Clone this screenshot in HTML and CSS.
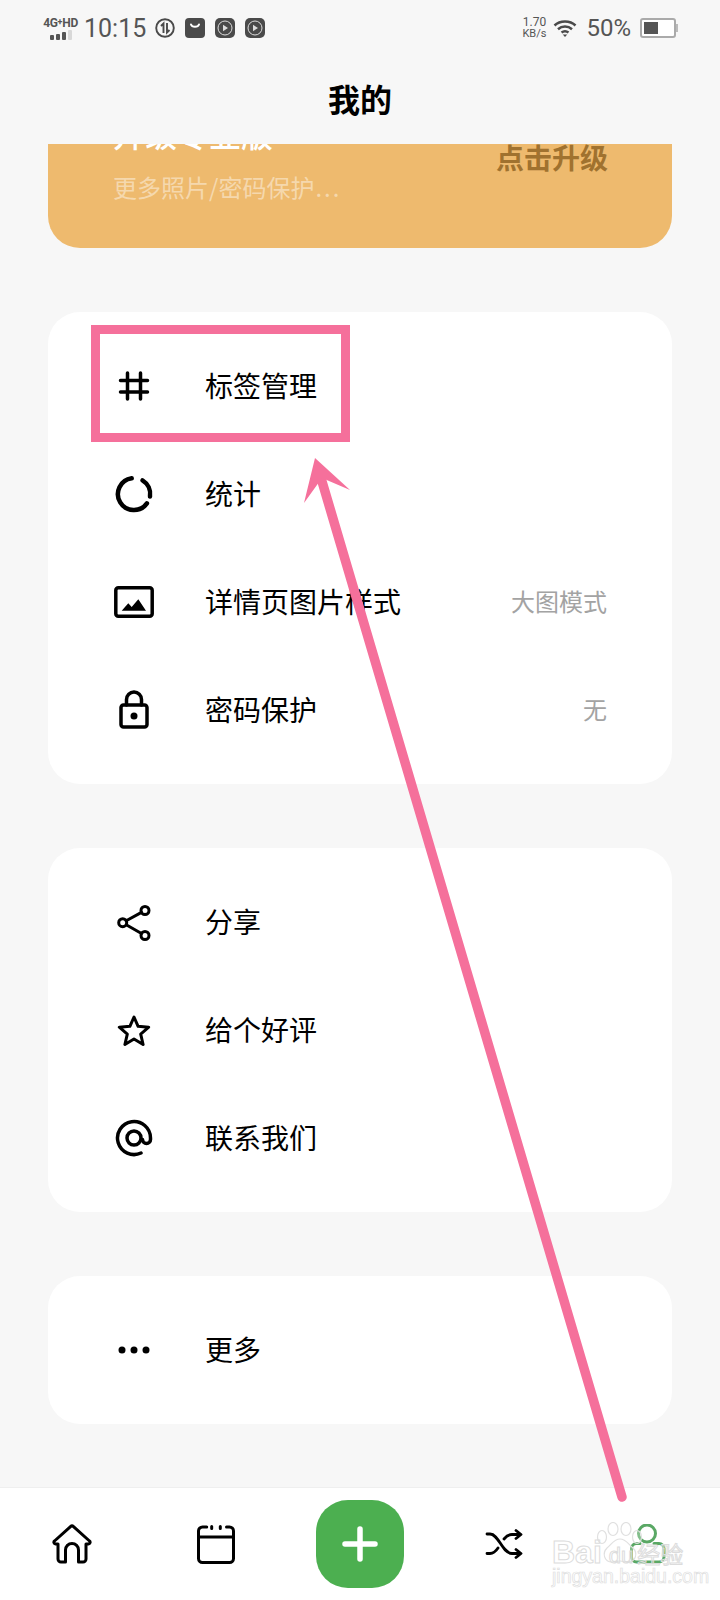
FILE: index.html
```html
<!DOCTYPE html>
<html lang="zh-CN">
<head>
<meta charset="utf-8">
<title>我的</title>
<link rel="stylesheet" href="styles.css">
</head>
<body>
<div class="app">
  <div class="status">
    <div class="status-left">
      <div class="net">
        <span class="net-label">4G<sup class="net-plus">+</sup>HD</span>
        <span class="bars"><i class="bar bar-1"></i><i class="bar bar-2"></i><i class="bar bar-3"></i><i class="bar bar-4"></i></span>
      </div>
      <span class="time">10:15</span>
      <svg class="st-icon" viewBox="0 0 20 20"><circle class="st-line" cx="10" cy="10" r="8.8"/><path class="st-line" d="M8.500 15V5.500L6 8M12 5v9.500l2.500-2.500"/></svg>
      <svg class="st-icon" viewBox="0 0 20 20"><rect class="st-fill" width="20" height="20" rx="4"/><path class="st-cut" d="M6 6.500c1 3 7 3 8 0"/></svg>
      <svg class="st-icon" viewBox="0 0 20 20"><rect class="st-fill" width="20" height="20" rx="5"/><circle class="st-ring" cx="10" cy="10" r="7"/><path class="st-white" d="M8 6.800v6.400l5-3.200z"/></svg>
      <svg class="st-icon" viewBox="0 0 20 20"><rect class="st-fill" width="20" height="20" rx="5"/><circle class="st-ring" cx="10" cy="10" r="7"/><path class="st-white" d="M8 6.800v6.400l5-3.200z"/></svg>
    </div>
    <div class="status-right">
      <div class="speed"><span class="speed-num">1.70</span><span class="speed-unit">KB/s</span></div>
      <svg class="wifi" viewBox="0 0 24 18"><path class="wifi-arc" d="M1.500 6.500C7 1.200 17 1.200 22.500 6.500M5 10.200c4-3.600 10-3.600 14 0M8.500 13.500c2-1.500 5-1.500 7 0"/><path class="wifi-dot" d="M9.700 15.500h4.600L12 18z"/></svg>
      <span class="pct">50%</span>
      <div class="battery"><div class="battery-body"><div class="battery-fill"></div></div><div class="battery-tip"></div></div>
    </div>
  </div>

  <header class="title-bar"><h1 class="title">我的</h1></header>

  <main class="scroll">
    <section class="banner">
      <div class="banner-text">
        <div class="banner-title">升级专业版</div>
        <div class="banner-sub">更多照片/密码保护<span class="dots">...</span></div>
      </div>
      <div class="banner-cta">点击升级</div>
    </section>

    <section class="card">
      <div class="row">
        <svg class="icon" viewBox="0 0 40 40"><path class="ln" d="M13.500 7v26M26.500 7v26M6.500 14.500h27M6.500 26h27"/></svg>
        <span class="label">标签管理</span>
      </div>
      <div class="row">
        <svg class="icon" viewBox="0 0 40 40"><path class="ln ln-ring" d="M32.900 29.400A16 16 0 1 1 17.700 4.200"/><path class="ln ln-ring" d="M28.500 6.400A16 16 0 0 1 36 22.500"/></svg>
        <span class="label">统计</span>
      </div>
      <div class="row">
        <svg class="icon" viewBox="0 0 40 40"><rect class="ln" x="1.800" y="5.800" width="36.400" height="28.400" rx="2.500"/><path class="solid" d="M7.700 28.700l6.600-7.400 3.400 3.800 6.600-7.800 7.700 11.400z"/></svg>
        <span class="label">详情页图片样式</span>
        <span class="value">大图模式</span>
      </div>
      <div class="row">
        <svg class="icon" viewBox="0 0 40 40"><rect class="ln" x="7" y="15" width="26" height="22" rx="2.500"/><path class="ln" d="M12.500 15V9.500a7.500 7.500 0 0 1 15 0V15"/><circle class="solid" cx="20" cy="26" r="3.500"/></svg>
        <span class="label">密码保护</span>
        <span class="value">无</span>
      </div>
    </section>

    <section class="card">
      <div class="row">
        <svg class="icon" viewBox="0 0 40 40"><circle class="ln ln-3" cx="31" cy="8.500" r="4"/><circle class="ln ln-3" cx="8.700" cy="20.700" r="4"/><circle class="ln ln-3" cx="31" cy="33.500" r="4"/><path class="ln ln-3" d="M12.200 18.700l15.300-8.300M12.200 22.700l15.300 8.800"/></svg>
        <span class="label">分享</span>
      </div>
      <div class="row">
        <svg class="icon" viewBox="0 0 40 40"><path class="ln ln-3" d="M20 7l4.100 9.300 10.600.9-8 6.900 2.400 10.400-9.100-5.500-9.100 5.500 2.400-10.400-8-6.900 10.600-.9z"/></svg>
        <span class="label">给个好评</span>
      </div>
      <div class="row">
        <svg class="icon" viewBox="0 0 40 40"><circle class="ln" cx="20" cy="20" r="7"/><path class="ln" d="M27 35A16.500 16.500 0 1 1 36.500 20v1.500a4 4 0 0 1-8 0"/></svg>
        <span class="label">联系我们</span>
      </div>
    </section>

    <section class="card">
      <div class="row">
        <svg class="icon" viewBox="0 0 40 40"><circle class="solid" cx="8" cy="20" r="3.500"/><circle class="solid" cx="20" cy="20" r="3.500"/><circle class="solid" cx="32" cy="20" r="3.500"/></svg>
        <span class="label">更多</span>
      </div>
    </section>
  </main>

  <nav class="nav">
    <div class="nav-item">
      <svg class="icon" viewBox="0 0 40 40"><path class="ln ln-3" d="M18.500 2.600a2.200 2.200 0 0 1 3 0L37.500 17a1.700 1.700 0 0 1-1 3H34v15a3 3 0 0 1-3 3h-4.500V26a6.500 6.500 0 0 0-13 0v12H9a3 3 0 0 1-3-3V20H3.500a1.700 1.700 0 0 1-1-3z"/></svg>
    </div>
    <div class="nav-item">
      <svg class="icon" viewBox="0 0 40 40"><path class="ln ln-3" d="M10.700 3H6.500a4 4 0 0 0-4 4v27.500a4 4 0 0 0 4 4h27a4 4 0 0 0 4-4V7a4 4 0 0 0-4-4h-3M2.500 13h35M15.700 2.500v2M24.300 2.500v2"/></svg>
    </div>
    <div class="nav-item">
      <div class="add"><svg class="add-plus" viewBox="0 0 36 36"><path class="add-line" d="M3 18h30M18 3v30"/></svg></div>
    </div>
    <div class="nav-item">
      <svg class="icon" viewBox="0 0 40 40"><path class="ln ln-shuffle" d="M3 10h3c9 0 12 19.500 22 19.500h8M3 29.500h3c3.500 0 6-2.500 8-5.500M20 15c2.500-3 5-4.500 8-4.500h8M32 6.500l5 4-5 4M32 25.500l5 4-5 4"/></svg>
    </div>
    <div class="nav-item">
      <svg class="icon" viewBox="0 0 40 40"><circle class="ln ln-green" cx="19" cy="9.500" r="8.500"/><path class="ln ln-green" d="M12 19.500H8.500a5 5 0 0 0-5 5V33a5 5 0 0 0 5 5H31a5 5 0 0 0 5-5v-8.500a5 5 0 0 0-5-5h-5"/></svg>
    </div>
  </nav>

  <div class="highlight"></div>
  <svg class="arrow" viewBox="0 0 720 1600"><path class="arrow-shaft" d="M321 478L622 1497"/><path class="arrow-head" d="M315 458L350 490 322 478 304 503z"/></svg>

  <div class="watermark">
    <svg class="paw" viewBox="0 0 48 44"><ellipse class="paw-toe" cx="6" cy="15" rx="4.500" ry="6.500"/><ellipse class="paw-toe" cx="17" cy="7" rx="5" ry="6.500"/><ellipse class="paw-toe" cx="30" cy="7" rx="5" ry="6.500"/><ellipse class="paw-toe" cx="41" cy="15" rx="4.500" ry="6.500"/><path class="paw-toe" d="M24 17c6 0 8 5 13 9 5 5 3 14-5 14-3 0-5-1-8-1s-5 1-8 1c-8 0-10-9-5-14 5-4 7-9 13-9z"/></svg>
    <div class="wm-main"><span class="wm-bai">Bai</span><span class="wm-du">du</span><span class="wm-cn">经验</span></div>
    <div class="wm-sub">jingyan.baidu.com</div>
  </div>
</div>
</body>
</html>
```

FILE: styles.css
```css
* { box-sizing: border-box; }

html, body {
  margin: 0;
  padding: 0;
  background: #f7f7f7;
}

body {
  font-family: "Noto Sans CJK SC", "Noto Sans", sans-serif;
  color: #000;
}

.app {
  position: relative;
  width: 720px;
  height: 1600px;
  display: flex;
  flex-direction: column;
  overflow: hidden;
  background: #f7f7f7;
}

/* status bar */
.status {
  height: 56px;
  flex: none;
  display: flex;
  justify-content: space-between;
  align-items: center;
  padding: 0 42px;
  color: #555;
}

.status-left, .status-right {
  display: flex;
  align-items: center;
}

.net {
  width: 37px;
  display: flex;
  flex-direction: column;
  align-items: center;
  gap: 1px;
}

.net-label {
  font-family: Roboto, sans-serif;
  font-size: 12px;
  line-height: 12px;
  font-weight: 700;
  letter-spacing: -0.3px;
  white-space: nowrap;
}

.net-plus {
  font-size: 9px;
  line-height: 0;
  vertical-align: 2px;
}

.bars {
  display: flex;
  align-items: flex-end;
  gap: 2px;
  height: 10px;
}

.bar {
  display: block;
  width: 4px;
  background: #555;
  border-radius: 1px;
}

.bar-1 { height: 5px; }
.bar-2 { height: 6px; }
.bar-3 { height: 8px; }
.bar-4 { height: 10px; background: #d8d8d8; }

.time {
  font-family: Roboto, sans-serif;
  font-size: 25px;
  margin: 0 9px 0 5px;
  color: #555;
}

.st-icon {
  width: 20px;
  height: 20px;
  margin-right: 10px;
}

.st-line { fill: none; stroke: #4a4a4a; stroke-width: 1.9; }
.st-fill { fill: #4a4a4a; }
.st-cut { fill: none; stroke: #fff; stroke-width: 2; stroke-linecap: round; }
.st-ring { fill: none; stroke: #ddd; stroke-width: 1; }
.st-white { fill: #ddd; }

.speed {
  display: flex;
  flex-direction: column;
  align-items: center;
  font-family: Roboto, sans-serif;
  line-height: 11px;
  margin-right: 7px;
  color: #555;
}

.speed-num { font-size: 12px; }
.speed-unit { font-size: 11px; }

.wifi {
  width: 24px;
  height: 18px;
  margin-right: 9px;
}

.wifi-arc { fill: none; stroke: #4a4a4a; stroke-width: 2.5; }
.wifi-dot { fill: #4a4a4a; }

.pct {
  font-family: Roboto, sans-serif;
  font-size: 24px;
  margin-right: 9px;
  color: #555;
}

.battery {
  display: flex;
  align-items: center;
}

.battery-body {
  width: 36px;
  height: 20px;
  border: 2px solid #aaa;
  border-radius: 3px;
  padding: 2px;
  background: #fff;
}

.battery-fill {
  width: 50%;
  height: 100%;
  background: #555;
}

.battery-tip {
  width: 2px;
  height: 8px;
  background: #bbb;
}

/* title */
.title-bar {
  height: 88px;
  flex: none;
  display: flex;
  align-items: center;
  justify-content: center;
  padding-bottom: 4px;
}

.title {
  margin: 0;
  font-size: 32px;
  line-height: 44px;
  font-weight: 700;
}

/* scrolling content */
.scroll {
  flex: 1;
  min-height: 0;
  overflow: hidden;
  display: flex;
  flex-direction: column;
  gap: 64px;
  padding: 0 48px;
}

.banner {
  flex: none;
  height: 164px;
  margin-top: -60px;
  padding: 27px 64px 0 65px;
  border-radius: 32px;
  background: #eeba6e;
  display: flex;
  justify-content: space-between;
  align-items: flex-start;
}

.banner-title {
  font-size: 32px;
  line-height: 44px;
  font-weight: 500;
  color: #fff;
}

.banner-sub {
  margin-top: 15px;
  font-size: 24px;
  line-height: 34px;
  color: rgba(255, 255, 255, 0.45);
}

.dots {
  letter-spacing: 2px;
  margin-left: 1px;
}

.banner-cta {
  margin-top: 26px;
  font-size: 28px;
  line-height: 40px;
  font-weight: 700;
  color: #a0722f;
}

.card {
  flex: none;
  padding: 20px 65px 20px 66px;
  border-radius: 32px;
  background: #fff;
}

.row {
  height: 108px;
  display: flex;
  align-items: center;
}

.icon {
  width: 40px;
  height: 40px;
  flex: none;
}

.ln {
  fill: none;
  stroke: #000;
  stroke-width: 3.5;
  stroke-linecap: round;
  stroke-linejoin: round;
}

.ln-3 { stroke-width: 3; }
.ln-ring { stroke-width: 4.5; }
.ln-shuffle { stroke-width: 2.8; }
.ln-green { stroke: #5aa865; stroke-width: 3; }
.solid { fill: #000; }

.label {
  margin: 0 0 2px 51px;
  font-size: 28px;
  line-height: 40px;
}

.value {
  margin: 0 0 2px auto;
  font-size: 24px;
  line-height: 34px;
  color: #a3a3a3;
}

/* bottom nav */
.nav {
  flex: none;
  height: 113px;
  display: grid;
  grid-template-columns: repeat(5, 1fr);
  align-items: center;
  background: #fff;
  border-top: 1px solid #efefef;
}

.nav-item {
  display: flex;
  justify-content: center;
  align-items: center;
}

.add {
  width: 88px;
  height: 88px;
  border-radius: 32px;
  background: #4caf50;
  display: flex;
  align-items: center;
  justify-content: center;
}

.add-plus {
  width: 36px;
  height: 36px;
}

.add-line {
  fill: none;
  stroke: #fff;
  stroke-width: 5.5;
  stroke-linecap: round;
}

/* annotation drawn over the screenshot */
.highlight {
  position: absolute;
  left: 91px;
  top: 325px;
  width: 259px;
  height: 117px;
  border: 9px solid #f5709b;
}

.arrow {
  position: absolute;
  left: 0;
  top: 0;
  width: 720px;
  height: 1600px;
  pointer-events: none;
}

.arrow-shaft {
  fill: none;
  stroke: #f5709b;
  stroke-width: 9.5;
  stroke-linecap: round;
}

.arrow-head { fill: #f5709b; }

/* image-host watermark */
.watermark {
  position: absolute;
  left: 552px;
  top: 1522px;
  width: 132px;
  height: 70px;
  font-family: "Liberation Sans", sans-serif;
  pointer-events: none;
}

.paw {
  position: absolute;
  left: 44px;
  top: 0;
  width: 48px;
  height: 44px;
}

.paw-toe {
  fill: rgba(255, 255, 255, 0.25);
  stroke: #e0e0e0;
  stroke-width: 1.2;
}

.wm-main {
  position: absolute;
  left: 0;
  top: 12px;
  display: flex;
  align-items: baseline;
  white-space: nowrap;
  color: rgba(255, 255, 255, 0.2);
  -webkit-text-stroke: 1px #dcdcdc;
}

.wm-bai { font-size: 32px; line-height: 36px; font-weight: 700; }
.wm-du { font-size: 22px; line-height: 36px; margin-left: 7px; }
.wm-cn {
  font-family: "Noto Sans CJK SC", sans-serif;
  font-size: 23px;
  line-height: 36px;
  margin-left: 4px;
}

.wm-sub {
  position: absolute;
  left: 0;
  top: 44px;
  font-size: 19.5px;
  line-height: 20px;
  white-space: nowrap;
  color: rgba(255, 255, 255, 0.2);
  -webkit-text-stroke: 0.7px #dedede;
}
```
